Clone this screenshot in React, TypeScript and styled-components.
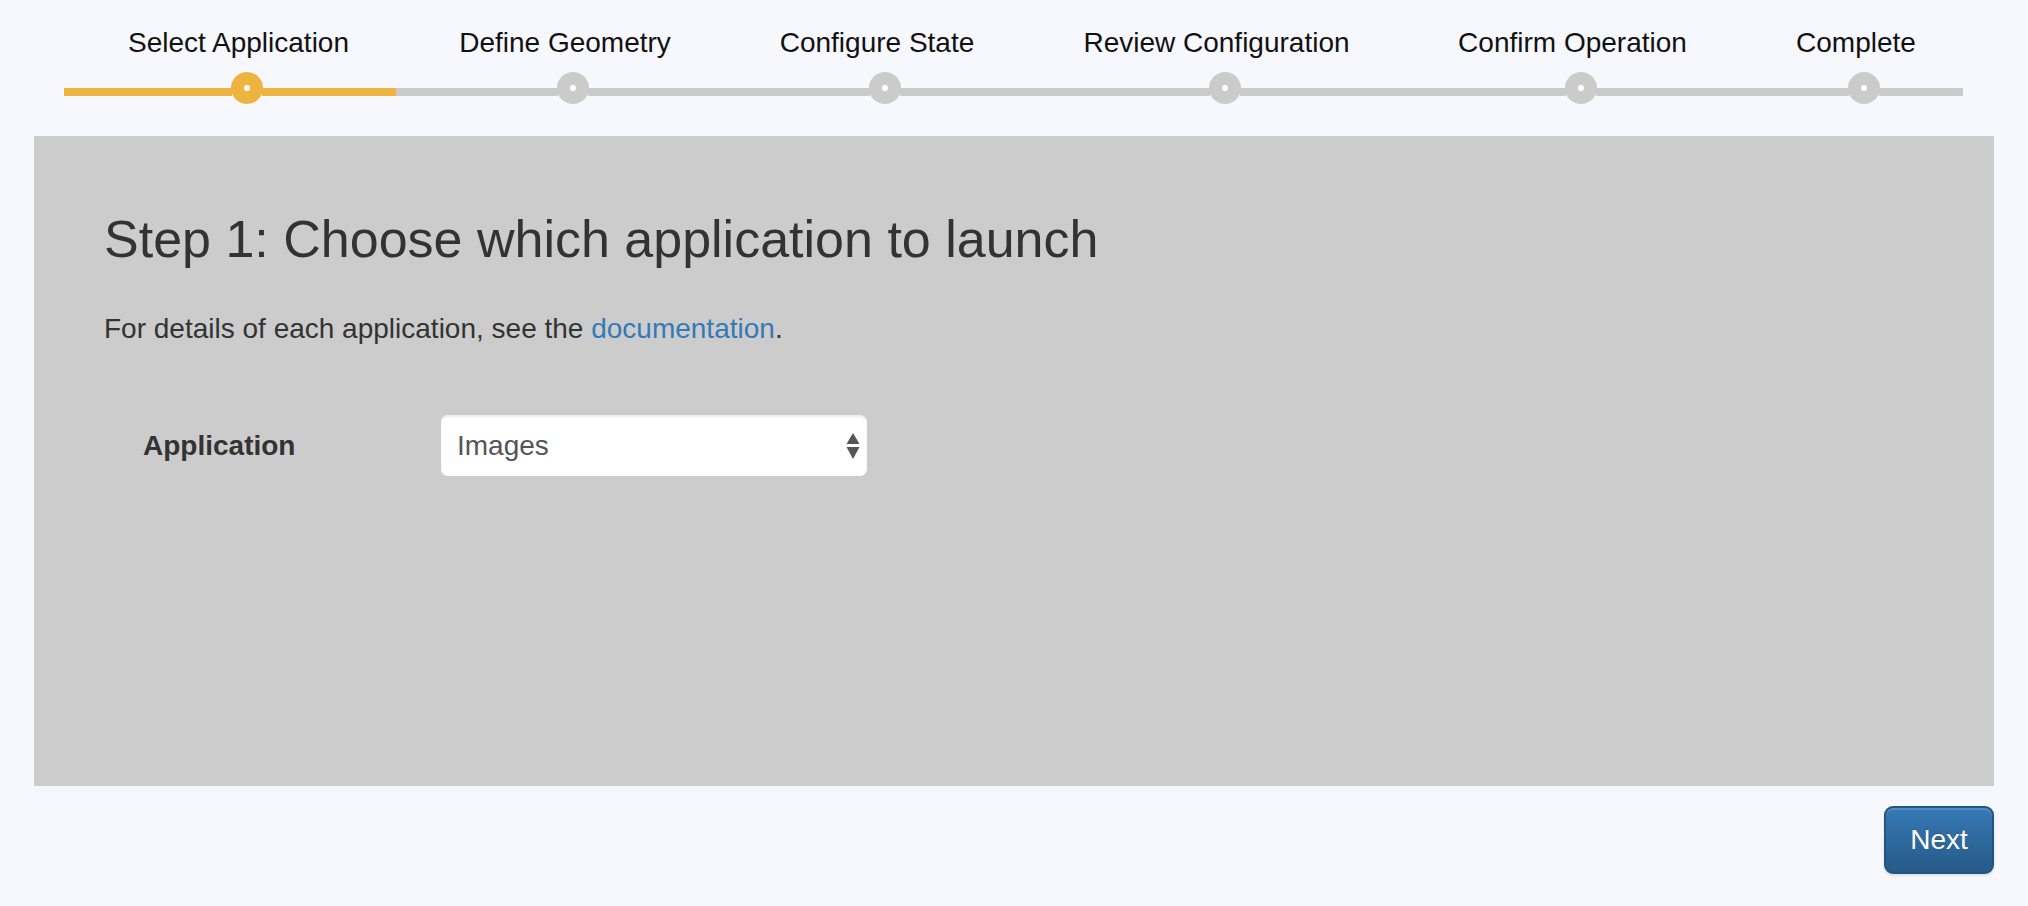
import React from 'react';
import styled, { createGlobalStyle, css } from 'styled-components';

const GlobalStyle = createGlobalStyle`
  html, body {
    margin: 0;
    padding: 0;
    background: #f7f8fd;
    font-family: "Liberation Sans", Arial, Helvetica, sans-serif;
  }
  * {
    box-sizing: border-box;
  }
`;

const ACCENT = '#efb33f';
const TRACK = '#cbcbcb';

const Page = styled.div`
  width: 2028px;
  height: 906px;
  overflow: hidden;
  background: #f7f8fd;
`;

// Wizard stepper
const Stepper = styled.div`
  display: flex;
  padding: 27px 0 0 64px;
  height: 136px;
`;

const Step = styled.div<{ $width: number }>`
  display: flex;
  flex-direction: column;
  align-items: center;
  width: ${p => p.$width}px;
  flex: 0 0 auto;
`;

const StepLabel = styled.div`
  font-size: 28px;
  line-height: 32px;
  color: #111;
  white-space: nowrap;
`;

const TrackRow = styled.div`
  display: flex;
  align-items: flex-start;
  width: 100%;
  margin-top: 13px;
`;

const Bar = styled.div<{ $fill: 'done' | 'todo' | 'partial'; $lead?: boolean }>`
  flex: 1 0 ${p => (p.$lead ? '16px' : '0px')};
  height: 8px;
  margin-top: 16px;
  ${p =>
    p.$fill === 'done'
      ? css`background: ${ACCENT};`
      : p.$fill === 'partial'
      ? css`background: linear-gradient(to right, ${ACCENT} 0, ${ACCENT} calc(100% - 17px), ${TRACK} calc(100% - 17px));`
      : css`background: ${TRACK};`}
`;

const Dot = styled.div<{ $active: boolean }>`
  flex: 0 0 32px;
  width: 32px;
  height: 32px;
  margin: 0 -1px;
  border-radius: 50%;
  background: ${p => (p.$active ? ACCENT : TRACK)};
  display: flex;
  align-items: center;
  justify-content: center;

  &::after {
    content: '';
    width: 6px;
    height: 6px;
    border-radius: 50%;
    background: #fff;
  }
`;

// Main panel
const Panel = styled.div`
  margin: 0 34px;
  height: 650px;
  background: #cccccc;
  padding: 75px 70px 0;
  color: #333;
`;

const Heading = styled.h3`
  margin: 0;
  font-size: 52px;
  font-weight: 400;
  line-height: 56px;
  color: #333;
`;

const Lead = styled.p`
  margin: 42px 0 0;
  font-size: 28px;
  line-height: 40px;
`;

const DocLink = styled.a`
  color: #337ab7;
  text-decoration: none;
`;

const FormRow = styled.div`
  display: grid;
  grid-template-columns: 336px 428px;
  align-items: center;
  margin-top: 65px;
`;

const FieldLabel = styled.label`
  padding-left: 39px;
  font-size: 28px;
  font-weight: 700;
  color: #333;
`;

const SelectWrap = styled.div`
  position: relative;
  width: 428px;
  height: 63px;
`;

const Select = styled.select`
  appearance: none;
  -webkit-appearance: none;
  width: 100%;
  height: 100%;
  padding: 0 40px 0 16px;
  font-family: inherit;
  font-size: 28px;
  color: #555;
  background: #fff;
  border: 1px solid #ccc;
  border-radius: 8px;
  box-shadow: inset 0 2px 2px rgba(0, 0, 0, 0.075);
  outline: none;
`;

const Arrows = styled.svg`
  position: absolute;
  right: 8px;
  top: 19px;
  pointer-events: none;
`;

// Footer
const Footer = styled.div`
  display: flex;
  justify-content: flex-end;
  margin: 0 34px;
  padding-top: 20px;
`;

const PrimaryButton = styled.button`
  width: 110px;
  height: 68px;
  font-family: inherit;
  font-size: 28px;
  color: #fff;
  border: 2px solid #245580;
  border-radius: 9px;
  background: linear-gradient(to bottom, #3679b5 0%, #265a88 100%);
  box-shadow: inset 0 2px 0 rgba(255, 255, 255, 0.15), 0 2px 3px rgba(0, 0, 0, 0.1);
  text-shadow: 0 -1px 0 rgba(0, 0, 0, 0.2);
  cursor: pointer;
`;

const steps = [
  { label: 'Select Application', width: 349 },
  { label: 'Define Geometry', width: 304 },
  { label: 'Configure State', width: 320 },
  { label: 'Review Configuration', width: 359 },
  { label: 'Confirm Operation', width: 353 },
  { label: 'Complete', width: 214 },
];

const current = 0;

export default function App() {
  return (
    <Page>
      <GlobalStyle />
      <Stepper>
        {steps.map((s, i) => (
          <Step key={s.label} $width={s.width}>
            <StepLabel>{s.label}</StepLabel>
            <TrackRow>
              <Bar $lead $fill={i <= current ? 'done' : 'todo'} />
              <Dot $active={i <= current} />
              <Bar $fill={i < current ? 'done' : i === current ? 'partial' : 'todo'} />
            </TrackRow>
          </Step>
        ))}
      </Stepper>

      <Panel>
        <Heading>Step 1: Choose which application to launch</Heading>
        <Lead>
          For details of each application, see the <DocLink href="#">documentation</DocLink>.
        </Lead>
        <FormRow>
          <FieldLabel htmlFor="application">Application</FieldLabel>
          <SelectWrap>
            <Select id="application" defaultValue="images">
              <option value="images">Images</option>
            </Select>
            <Arrows width="14" height="27" viewBox="0 0 14 27">
              <polygon points="7,0 13.5,11 0.5,11" fill="#555" />
              <polygon points="0.5,14 13.5,14 7,26" fill="#555" />
            </Arrows>
          </SelectWrap>
        </FormRow>
      </Panel>

      <Footer>
        <PrimaryButton>Next</PrimaryButton>
      </Footer>
    </Page>
  );
}
